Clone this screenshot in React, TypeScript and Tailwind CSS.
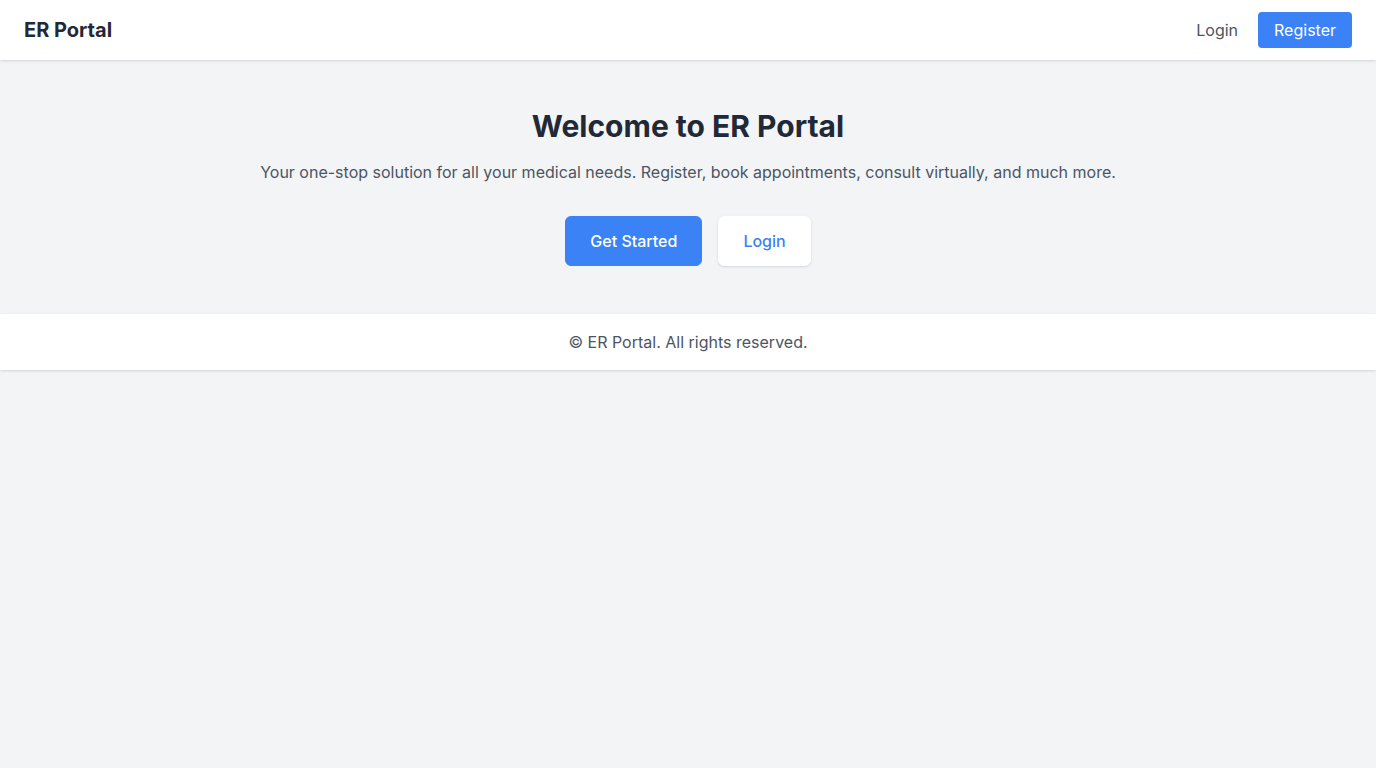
export default function App() {
  return (
    <div className="min-h-screen bg-[#f3f4f6] font-['Inter',sans-serif]">
      <header className="bg-white shadow">
        <div className="flex items-center justify-between px-6 py-3">
          <span className="text-xl font-bold text-[#1f2937]">ER Portal</span>
          <nav className="flex items-center gap-2">
            <a href="#" className="px-3 py-1.5 text-base leading-6 text-[#4b5563]">
              Login
            </a>
            <a href="#" className="rounded bg-[#3b82f6] px-4 py-1.5 text-base leading-6 text-white">
              Register
            </a>
          </nav>
        </div>
      </header>

      <main className="py-12 text-center">
        <h1 className="mb-4 text-3xl font-bold text-[#1f2937]">Welcome to ER Portal</h1>
        <p className="mb-8 text-base text-[#4b5563]">
          Your one-stop solution for all your medical needs. Register, book appointments, consult virtually, and much more.
        </p>
        <div className="flex justify-center gap-4">
          <a href="#" className="rounded-md border border-[#3b82f6] bg-[#3b82f6] px-6 py-3 font-medium text-white">
            Get Started
          </a>
          <a href="#" className="rounded-md border border-white bg-white px-6 py-3 font-medium text-[#3b82f6] shadow-sm">
            Login
          </a>
        </div>
      </main>

      <footer className="bg-white py-4 text-center shadow">
        <p className="text-base text-[#4b5563]">© ER Portal. All rights reserved.</p>
      </footer>
    </div>
  );
}
